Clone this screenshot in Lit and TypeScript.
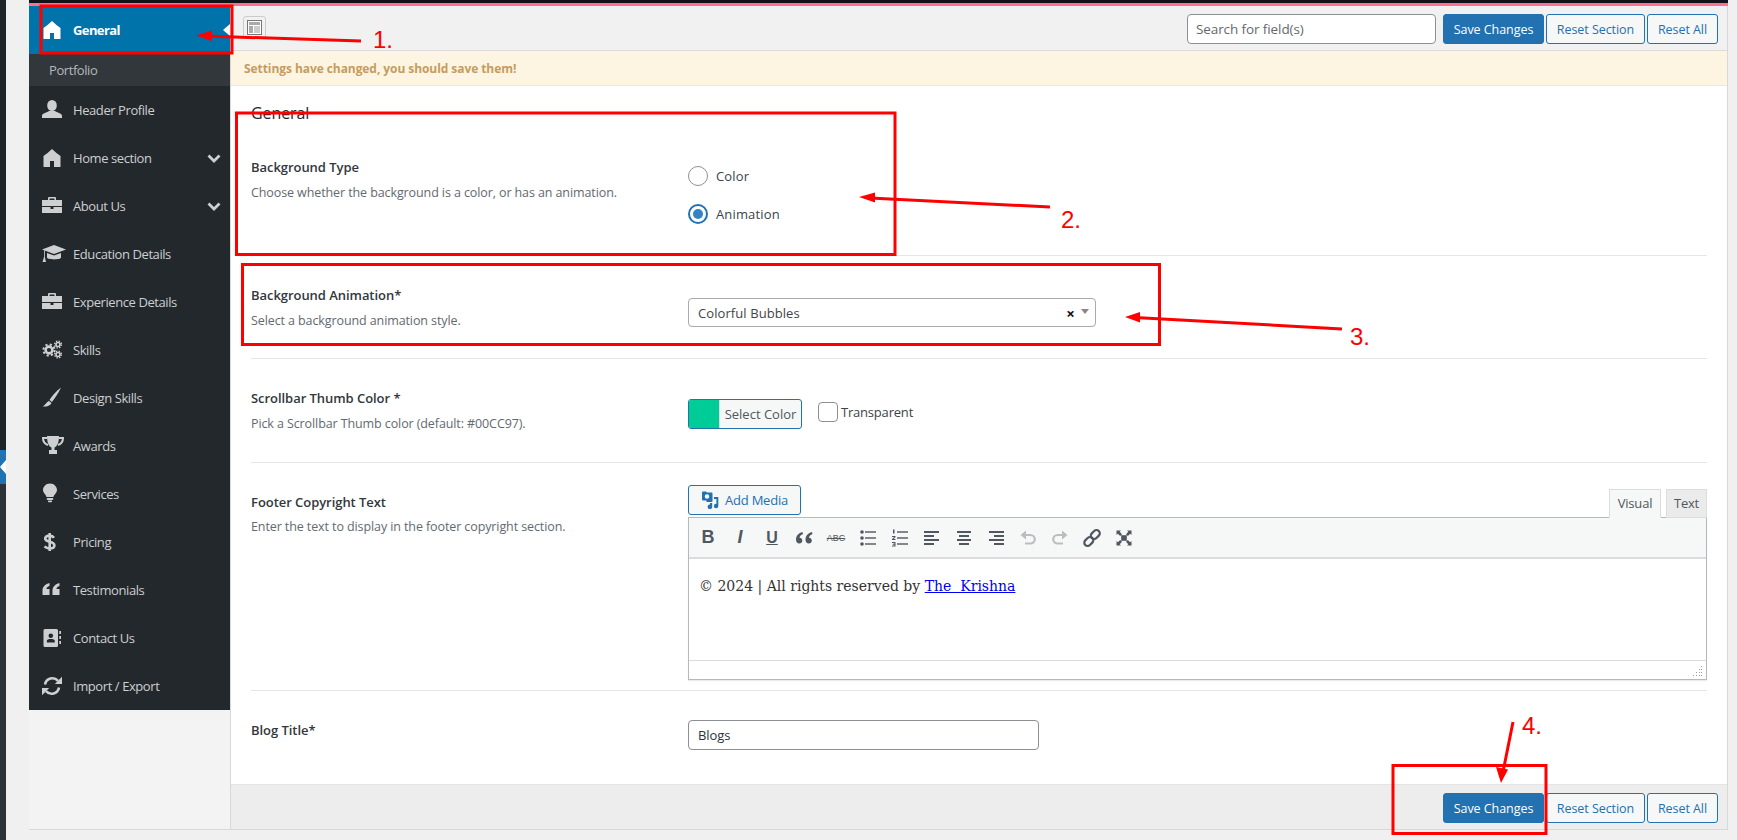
import { LitElement, html, css, svg } from "lit";
import { customElement } from "lit/decorators.js";

const icons: Record<string, unknown> = {
  home: svg`<path d="M11 3C8 6 5 8 2.5 10V21H9V15H13V21H19.5V10C17 8 14 6 11 3Z"/>`,
  user: svg`<ellipse cx="11" cy="7.5" rx="4.8" ry="5.5"/><path d="M1 20V18C1 15 5 15 8 13H14C17 15 21 15 21 18V20Z"/>`,
  case: svg`<path fill-rule="evenodd" d="M8 3H14A1 1 0 0 1 15 4V6H21V12H1V6H7V4A1 1 0 0 1 8 3ZM8.5 4.5V6H13.5V4.5Z"/><path d="M1 13H9.5V15H12.5V13H21V19H1Z"/>`,
  cap: svg`<path d="M13 3L25 7.5L13 12L1 7.5Z"/><path d="M6 11V15.5C6 18 20 18 20 15.5V11L13 13.5Z"/><path d="M3 8V15L1.5 20H5L3.8 15V8.3Z"/>`,
  cogs: svg`<g fill="none" stroke="currentColor"><circle cx="8" cy="12" r="3.4" stroke-width="2.6"/><circle cx="8" cy="12" r="5.6" stroke-width="2" stroke-dasharray="2.2 2.2"/><circle cx="17" cy="6.5" r="2" stroke-width="1.6"/><circle cx="17" cy="6.5" r="3.4" stroke-width="1.4" stroke-dasharray="1.4 1.3"/><circle cx="17" cy="16.5" r="2" stroke-width="1.6"/><circle cx="17" cy="16.5" r="3.4" stroke-width="1.4" stroke-dasharray="1.4 1.3"/></g>`,
  brush: svg`<path d="M20 1.5C15.5 5 11 10 8.5 14L11 16C14 12 17.5 7 20 1.5Z"/><path d="M8 15L10.5 17C9 20 5 21 1.5 20.5C4.5 19.5 5 16 8 15Z"/>`,
  trophy: svg`<path d="M6 2H18C18 9 16 12.5 13.5 13.5V16H16V20H8V16H10.5V13.5C8 12.5 6 9 6 2Z"/><path fill="none" stroke="currentColor" stroke-width="2" d="M6 4H2C2 8 4 10 7 11M18 4H22C22 8 20 10 17 11"/>`,
  bulb: svg`<path d="M9 1.5C4.5 1.5 2 5 2 8C2 11 5 12.5 5.5 15H12.5C13 12.5 16 11 16 8C16 5 13.5 1.5 9 1.5Z"/><rect x="5.7" y="16" width="6.6" height="2" rx="1"/><rect x="7" y="18.6" width="4" height="1.6" rx=".8"/>`,
  dollar: svg`<path fill="none" stroke="currentColor" stroke-width="2.6" d="M13 7.7C12 6.2 10.5 5.6 8.5 5.6C6 5.6 4.2 6.6 4.2 8.5C4.2 13 13.4 10.5 13.4 15.5C13.4 17.5 11.5 18.4 8.6 18.4C6.6 18.4 5 17.9 3.5 16.4M8.7 3V21"/>`,
  quote: svg`<path d="M8.5 5C4.5 6 1.5 8.5 1.5 12.5V17H8.5V11H5.5C5.5 9.5 6.5 8.5 8.5 8Z"/><path d="M18.5 5C14.5 6 11.5 8.5 11.5 12.5V17H18.5V11H15.5C15.5 9.5 16.5 8.5 18.5 8Z"/>`,
  contact: svg`<path fill-rule="evenodd" d="M4 3H15.5A1.5 1.5 0 0 1 17 4.5V19.5A1.5 1.5 0 0 1 15.5 21H4A1.5 1.5 0 0 1 2.5 19.5V4.5A1.5 1.5 0 0 1 4 3ZM9.8 7.5A2.3 2.3 0 1 0 9.8 12.1A2.3 2.3 0 1 0 9.8 7.5ZM5.8 16.5H13.8V15C13.8 13.5 12 13 9.8 13C7.6 13 5.8 13.5 5.8 15Z"/><rect x="18.3" y="5" width="1.7" height="3"/><rect x="18.3" y="10" width="1.7" height="3"/><rect x="18.3" y="15" width="1.7" height="3"/>`,
  sync: svg`<path fill="none" stroke="currentColor" stroke-width="2.6" d="M4 10.5A7.5 7.5 0 0 1 17 6.8M18 13.5A7.5 7.5 0 0 1 5 17.2"/><path d="M21 2.8V10H13.8Z"/><path d="M1 21.2V14H8.2Z"/>`,
};

const menu: { label: string; icon: string; more?: boolean }[] = [
  { label: "Header Profile", icon: "user" },
  { label: "Home section", icon: "home", more: true },
  { label: "About Us", icon: "case", more: true },
  { label: "Education Details", icon: "cap" },
  { label: "Experience Details", icon: "case" },
  { label: "Skills", icon: "cogs" },
  { label: "Design Skills", icon: "brush" },
  { label: "Awards", icon: "trophy" },
  { label: "Services", icon: "bulb" },
  { label: "Pricing", icon: "dollar" },
  { label: "Testimonials", icon: "quote" },
  { label: "Contact Us", icon: "contact" },
  { label: "Import / Export", icon: "sync" },
];

const sideIcon = (n: string) => html`<svg class="micon" viewBox="0 0 26 24" fill="currentColor">${icons[n]}</svg>`;

const tool = (d: unknown, cls = "") => html`<span class="tb ${cls}"><svg width="20" height="20" viewBox="0 0 20 20" fill="currentColor">${d}</svg></span>`;

@customElement("app-root")
export class AppRoot extends LitElement {
  static styles = css`
    :host { display: flex; width: 1737px; height: 840px; background: #f0f0f1; overflow: hidden; position: relative;
      font-family: "Open Sans", "Noto Sans", sans-serif; font-size: 13px; color: #23282d; letter-spacing: -0.05px; }
    * { box-sizing: border-box; }
    .rail { width: 6px; flex: none; display: flex; flex-direction: column; background: #1d2327; }
    .rail-top { height: 450px; }
    .rail-cur { height: 34px; background: #2271b1; display: flex; align-items: center; justify-content: flex-end; }
    .rail-cur i { border: 7px solid transparent; border-right: 6px solid #fff; border-left: 0; }
    .rail-low { flex: 1; background: #2c3338; }
    .wrap { flex: 1; padding-left: 23px; padding-right: 9px; display: flex; flex-direction: column; height: 830px; }
    .strip { height: 3px; background: #111318; flex: none; }
    .pink { height: 3px; background: #ff6f91; flex: none; }
    .panel { flex: 1; display: flex; border: 1px solid #d8d8d8; border-top: 0; min-height: 0; }
    .side { width: 202px; flex: none; background: #f3f3f3; border-right: 1px solid #d8d8d8; margin-left: -1px; }
    .item { height: 48px; display: flex; align-items: center; padding-left: 12px; background: #23282d; color: #cdcfd0; font-size: 13px; letter-spacing: -0.42px; }
    .micon { width: 26px; height: 24px; margin-right: 6px; flex: none; }
    .item.active { background: #0073aa; color: #fff; font-weight: 700; letter-spacing: -0.6px; }
    .item.active::after { content: ""; margin-left: auto; border: 6px solid transparent; border-right: 7px solid #fff; border-left: 0; }
    .sub { height: 32px; display: flex; align-items: center; padding-left: 20px; background: #32373c; color: #b4b9be; font-size: 13px; letter-spacing: -0.42px; }
    .chev { margin-left: auto; margin-right: 9px; width: 14px; height: 9px; }
    .main { flex: 1; min-width: 0; display: flex; flex-direction: column; background: #fff; }
    .head { height: 45px; flex: none; background: #f1f1f1; border-bottom: 1px solid #dcdcdc; display: flex; justify-content: space-between; align-items: flex-start; padding: 8px 9px 0 12px; }
    .toggle { width: 23px; height: 23px; margin-top: 2px; border: 1px solid #ccc; border-radius: 3px; display: flex; align-items: center; justify-content: center; }
    .actions { display: flex; }
    .search { width: 249px; height: 30px; border: 1px solid #8c8f94; border-radius: 4px; background: #fff; margin-right: 7px; padding-left: 8px; display: flex; align-items: center; color: #646970; font-size: 13.5px; letter-spacing: -0.1px; }
    .btn { height: 30px; border: 1px solid #2271b1; border-radius: 3px; display: flex; align-items: center; justify-content: center; background: #f6f7f7; color: #2271b1; font-size: 12.5px; }
    .save { width: 101px; background: #2271b1; color: #fff; margin-right: 2px; }
    .rs { width: 99px; margin-right: 2px; }
    .ra { width: 71px; }
    .notice { height: 35px; flex: none; background: #fdf5e2; border-bottom: 1px solid #e8e8e8; display: flex; align-items: center; padding-left: 13px; color: #c59c60; font-weight: 700; font-size: 12px; letter-spacing: -0.07px; }
    .body { flex: 1; padding: 0 20px 0 20px; min-height: 0; }
    h2 { margin: 15px 0 3px; height: 24px; line-height: 24px; font-size: 16px; font-weight: 400; color: #1d2327; letter-spacing: -0.1px; }
    .row { display: grid; grid-template-columns: 437px 1fr; padding-top: 29px; border-bottom: 1px solid #e6e6e6; }
    .row:last-child { border-bottom: 0; }
    .r1 { height: 128px; } .r2 { height: 103px; } .r3 { height: 104px; } .r4 { height: 228px; } .r5 { height: 93px; }
    .r4 .desc { margin-top: 5px; }
    .lab { font-weight: 600; font-size: 13px; line-height: 20px; color: #32373c; letter-spacing: -0.05px; }
    .desc { margin-top: 6px; line-height: 20px; color: #646970; font-size: 12.5px; letter-spacing: -0.1px; }
    .radios { margin-top: 9px; display: flex; flex-direction: column; gap: 18px; }
    .radio { display: flex; align-items: center; height: 20px; gap: 8px; font-size: 13px; color: #3c434a; letter-spacing: 0.15px; }
    .dot { width: 20px; height: 20px; border-radius: 50%; border: 1px solid #8c8f94; display: flex; align-items: center; justify-content: center; }
    .dot.on { border: 2px solid #2271b1; }
    .dot.on i { width: 10px; height: 10px; border-radius: 50%; background: #3582c4; }
    .select { margin-top: 13px; width: 408px; height: 29px; border: 1px solid #aaa; border-radius: 4px; display: flex; align-items: center; padding: 0 6px 0 9px; font-size: 13px; color: #444; letter-spacing: 0.08px; }
    .select .x { margin-left: auto; font-size: 15px; font-weight: 700; color: #111; }
    .select .arr { margin-left: 6px; border: 4px solid transparent; border-top: 5px solid #888; border-bottom: 0; margin-top: -2px; }
    .colors { margin-top: 11px; display: flex; align-items: flex-start; }
    .cbtn { width: 114px; height: 30px; border: 1px solid #2271b1; border-radius: 3px; background: #f6f7f7; color: #50575e; display: flex; align-items: stretch; overflow: hidden; letter-spacing: 0; }
    .swatch { width: 31px; background: #00cc97; border-right: 1px solid #dcdcde; }
    .cbtn span:last-child { flex: 1; display: flex; align-items: center; justify-content: center; }
    .check { width: 20px; height: 20px; border: 1px solid #8c8f94; border-radius: 4px; margin: 3px 3px 0 16px; }
    .tlabel { font-size: 13px; color: #3c434a; line-height: 27px; letter-spacing: -0.2px; }
    .field4 { margin-top: -7px; }
    .edtop { display: flex; justify-content: space-between; align-items: flex-end; height: 32px; }
    .media { align-self: flex-start; width: 113px; height: 30px; gap: 6px; font-size: 13px; letter-spacing: -0.2px; }
    .tabs { display: flex; gap: 5px; margin-bottom: -1px; position: relative; }
    .tab { height: 29px; padding-bottom: 2px; border: 1px solid #dcdcde; display: flex; align-items: center; justify-content: center; font-size: 13px; color: #50575e; letter-spacing: -0.2px; }
    .visual { width: 52px; background: #f6f7f7; border-bottom-color: #f6f7f7; }
    .text { width: 41px; background: #ebebeb; }
    .editor { border: 1px solid #b4b9be; box-shadow: 0 1px 1px rgba(0,0,0,.08); height: 163px; display: flex; flex-direction: column; }
    .tools { height: 41px; flex: none; background: #f6f7f7; border-bottom: 2px solid #dcdcde; display: flex; align-items: center; padding-left: 3px; color: #50575e; }
    .tb { width: 32px; flex: none; height: 24px; display: flex; align-items: center; justify-content: center; font-family: "Liberation Sans", sans-serif; letter-spacing: 0; }
    .tb.off { color: #bbbdc0; }
    .tb.t { font-size: 18px; font-weight: 700; }
    .tb.i { font-style: italic; }
    .tb.u { text-decoration: underline; font-size: 16px; }
    .tb.abc { font-size: 9px; text-decoration: line-through; }
    .content { flex: 1; padding: 16px 10px; font-family: "DejaVu Serif", serif; font-size: 14px; line-height: 22px; color: #333; letter-spacing: 0; white-space: nowrap; }
    .content a { color: #00e; text-decoration: underline; }
    .status { height: 19px; flex: none; border-top: 1px solid #dcdcde; display: flex; justify-content: flex-end; align-items: flex-end; padding: 0 3px 3px 0; }
    .input { width: 351px; height: 30px; border: 1px solid #8c8f94; border-radius: 4px; display: flex; align-items: center; padding-left: 9px; font-size: 13px; color: #2c3338; }
    .foot { height: 45px; flex: none; background: #ededed; border-top: 1px solid #e4e4e4; display: flex; justify-content: flex-end; padding: 8px 9px 0 0; }
    .marks { position: absolute; left: 0; top: 0; width: 1737px; height: 840px; pointer-events: none; }
    .marks text { font-family: "Liberation Sans", sans-serif; font-size: 24px; fill: #f00; letter-spacing: 0; }
  `;

  private buttons() {
    return html`<div class="btn save">Save Changes</div><div class="btn rs">Reset Section</div><div class="btn ra">Reset All</div>`;
  }

  render() {
    return html`
      <div class="rail"><div class="rail-top"></div><div class="rail-cur"><i></i></div><div class="rail-low"></div></div>
      <div class="wrap">
        <div class="strip"></div><div class="pink"></div>
        <div class="panel">
          <nav class="side">
            <div class="item active">${sideIcon("home")}General</div>
            <div class="sub">Portfolio</div>
            ${menu.map((m) => html`<div class="item">${sideIcon(m.icon)}${m.label}${m.more
              ? html`<svg class="chev" viewBox="0 0 14 9" fill="none" stroke="currentColor" stroke-width="2.8"><path d="M1.5 1.5L7 7L12.5 1.5"/></svg>` : ""}</div>`)}
          </nav>
          <div class="main">
            <div class="head">
              <div class="toggle"><svg width="15" height="15" viewBox="0 0 15 15"><rect x=".5" y=".5" width="14" height="14" fill="#fff" stroke="#777"/><rect x="2" y="2" width="11" height="3" fill="#aaa"/><rect x="2" y="6" width="4" height="7" fill="#aaa"/><rect x="7" y="6" width="6" height="7" fill="#ccc"/></svg></div>
              <div class="actions"><div class="search">Search for field(s)</div>${this.buttons()}</div>
            </div>
            <div class="notice">Settings have changed, you should save them!</div>
            <div class="body">
              <h2>General</h2>
              <div class="row r1">
                <div><div class="lab">Background Type</div><div class="desc">Choose whether the background is a color, or has an animation.</div></div>
                <div class="radios">
                  <div class="radio"><span class="dot"></span>Color</div>
                  <div class="radio"><span class="dot on"><i></i></span>Animation</div>
                </div>
              </div>
              <div class="row r2">
                <div><div class="lab">Background Animation*</div><div class="desc">Select a background animation style.</div></div>
                <div><div class="select">Colorful Bubbles<span class="x">×</span><span class="arr"></span></div></div>
              </div>
              <div class="row r3">
                <div><div class="lab">Scrollbar Thumb Color *</div><div class="desc">Pick a Scrollbar Thumb color (default: #00CC97).</div></div>
                <div class="colors"><div class="cbtn"><span class="swatch"></span><span>Select Color</span></div><span class="check"></span><span class="tlabel">Transparent</span></div>
              </div>
              <div class="row r4">
                <div><div class="lab">Footer Copyright Text</div><div class="desc">Enter the text to display in the footer copyright section.</div></div>
                <div class="field4">
                  <div class="edtop">
                    <div class="btn media"><svg width="18" height="18" viewBox="0 0 18 18" fill="#2271b1"><path fill-rule="evenodd" d="M2 .5H5L6 1.5H10.5A1 1 0 0 1 11.5 2.5V10A1 1 0 0 1 10.5 11H5.5L5.5 9.5L2 9.5A1 1 0 0 1 1 8.5V1.5A1 1 0 0 1 2 .5ZM6 3.2A2.3 2.3 0 1 0 6 7.8A2.3 2.3 0 1 0 6 3.2Z"/><path d="M13 6H17.3V15A2.2 2.2 0 1 1 15.4 12.9V8H13Z"/><path d="M9 12H11.2V15.5A2.3 2.3 0 1 1 9 13.5Z"/></svg>Add Media</div>
                    <div class="tabs"><div class="tab visual">Visual</div><div class="tab text">Text</div></div>
                  </div>
                  <div class="editor">
                    <div class="tools">
                      <span class="tb t">B</span>
                      <span class="tb t i">I</span>
                      <span class="tb t u">U</span>
                      ${tool(svg`<path d="M8.5 4C4.5 5 2 8 2 11.5C2 14 3.5 15.5 5.3 15.5C7 15.5 8.3 14.2 8.3 12.5C8.3 11 7 9.8 5.5 9.8C5.8 8 7 6.7 9 6ZM18 4C14 5 11.5 8 11.5 11.5C11.5 14 13 15.5 14.8 15.5C16.5 15.5 17.8 14.2 17.8 12.5C17.8 11 16.5 9.8 15 9.8C15.3 8 16.5 6.7 18.5 6Z"/>`)}
                      <span class="tb abc">ABC</span>
                      ${tool(svg`<circle cx="4" cy="4" r="1.8"/><circle cx="4" cy="10" r="1.8"/><circle cx="4" cy="16" r="1.8"/><rect x="7" y="3.3" width="11" height="1.4"/><rect x="7" y="9.3" width="11" height="1.4"/><rect x="7" y="15.3" width="11" height="1.4"/>`)}
                      ${tool(svg`<rect x="3" y="1.5" width="1.5" height="4"/><path d="M2 8H5.5V9.2L3.6 11H5.5V12H2V11L4.2 9H2Z"/><path d="M2 14H5.5V18.5H2V17.5H4.4V16.7H2.8V15.8H4.4V15H2Z"/><rect x="7" y="3.3" width="11" height="1.4"/><rect x="7" y="9.3" width="11" height="1.4"/><rect x="7" y="15.3" width="11" height="1.4"/>`)}
                      ${tool(svg`<rect x="2" y="3" width="15" height="2"/><rect x="2" y="7" width="10" height="2"/><rect x="2" y="11" width="15" height="2"/><rect x="2" y="15" width="10" height="2"/>`)}
                      ${tool(svg`<rect x="3" y="3" width="14" height="2"/><rect x="5" y="7" width="10" height="2"/><rect x="3" y="11" width="14" height="2"/><rect x="5" y="15" width="10" height="2"/>`)}
                      ${tool(svg`<rect x="3" y="3" width="15" height="2"/><rect x="8" y="7" width="10" height="2"/><rect x="3" y="11" width="15" height="2"/><rect x="8" y="15" width="10" height="2"/>`)}
                      ${tool(svg`<path fill="none" stroke="currentColor" stroke-width="2.2" d="M4.5 7H12.5A4.2 4.2 0 0 1 12.5 15.5H7"/><path d="M8 2.5V11.5L2.5 7Z"/>`, "off")}
                      ${tool(svg`<path fill="none" stroke="currentColor" stroke-width="2.2" d="M15.5 7H7.5A4.2 4.2 0 0 0 7.5 15.5H13"/><path d="M12 2.5V11.5L17.5 7Z"/>`, "off")}
                      ${tool(svg`<g fill="none" stroke="currentColor" stroke-width="2.2"><rect x="10" y="1.5" width="6.6" height="10" rx="3.3" transform="rotate(45 13.3 6.5)"/><rect x="3.5" y="8.5" width="6.6" height="10" rx="3.3" transform="rotate(45 6.8 13.5)"/></g>`)}
                      ${tool(svg`<rect x="7.2" y="7.2" width="5.6" height="5.6"/><path d="M2.5 2.5H7L5.7 3.8L8 6.2L6.2 8L3.8 5.7L2.5 7ZM17.5 2.5V7L16.2 5.7L13.8 8L12 6.2L14.3 3.8L13 2.5ZM2.5 17.5V13L3.8 14.3L6.2 12L8 13.8L5.7 16.2L7 17.5ZM17.5 17.5H13L14.3 16.2L12 13.8L13.8 12L16.2 14.3L17.5 13Z"/>`)}
                    </div>
                    <div class="content">© 2024 | All rights reserved by <a>The&nbsp;&nbsp;Krishna</a></div>
                    <div class="status"><svg width="11" height="10" viewBox="0 0 11 10" fill="#999"><rect x="9" y="0" width="1" height="1"/><rect x="7" y="3" width="1" height="1"/><rect x="9" y="3" width="1" height="1"/><rect x="4" y="6" width="1" height="1"/><rect x="7" y="6" width="1" height="1"/><rect x="9" y="6" width="1" height="1"/><rect x="1" y="9" width="1" height="1"/><rect x="4" y="9" width="1" height="1"/><rect x="7" y="9" width="1" height="1"/><rect x="9" y="9" width="1" height="1"/></svg></div>
                  </div>
                </div>
              </div>
              <div class="row r5">
                <div class="lab">Blog Title*</div>
                <div><div class="input">Blogs</div></div>
              </div>
            </div>
            <div class="foot">${this.buttons()}</div>
          </div>
        </div>
      </div>
      <svg class="marks" viewBox="0 0 1737 840" fill="none" stroke="#f00" stroke-width="3">
        <rect x="41" y="6" width="191" height="47"/>
        <rect x="236.5" y="113" width="658.5" height="141.5"/>
        <rect x="242.5" y="264.5" width="917" height="80"/>
        <rect x="1393" y="765.5" width="153" height="68"/>
        <path d="M361 41L205 36M1050 207L870 198M1342 329L1135 317.5M1513 722L1503 772"/>
        <g fill="#f00" stroke="none">
          <path d="M196 35.5L212 30.5L212 41Z"/>
          <path d="M859 197L875 192.5L875 202.5Z"/>
          <path d="M1125 317L1140 312L1140 322.5Z"/>
          <path d="M1501 783L1496 767L1508 769.5Z"/>
          <text x="373" y="48">1.</text>
          <text x="1061" y="228">2.</text>
          <text x="1350" y="345">3.</text>
          <text x="1522" y="734">4.</text>
        </g>
      </svg>
    `;
  }
}
